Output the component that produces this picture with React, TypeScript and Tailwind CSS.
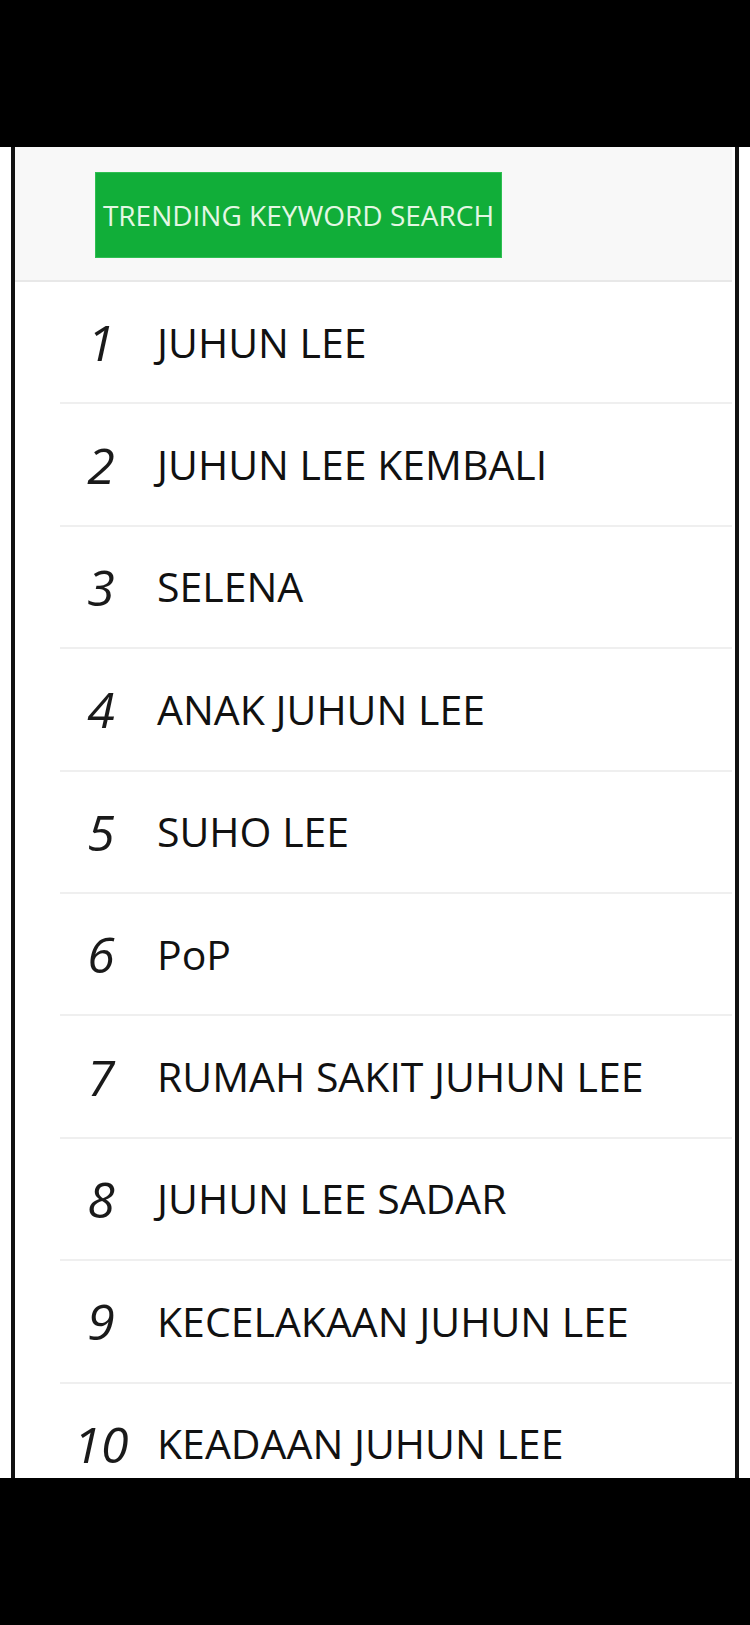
import React from "react";

const items = [
  "JUHUN LEE",
  "JUHUN LEE KEMBALI",
  "SELENA",
  "ANAK JUHUN LEE",
  "SUHO LEE",
  "PoP",
  "RUMAH SAKIT JUHUN LEE",
  "JUHUN LEE SADAR",
  "KECELAKAAN JUHUN LEE",
  "KEADAAN JUHUN LEE",
];

export default function App() {
  return (
    <div
      className="w-[750px] h-[1625px] bg-white flex flex-col"
      style={{ fontFamily: '"Open Sans", "Noto Sans", sans-serif' }}
    >
      <div className="h-[147px] bg-black shrink-0" />
      <div className="h-[1331px] flex shrink-0 overflow-hidden">
        <div className="w-[11px] bg-white shrink-0" />
        <div className="w-[4px] bg-[#111] shrink-0" />
        <div className="flex-1 flex flex-col pr-[3px] overflow-hidden">
          <div className="h-[135px] shrink-0 bg-[#f8f8f8] border-b-2 border-[#e8e8e8] pl-[80px] pt-[25px]">
            <div className="w-[407px] h-[86px] bg-[#11ae39] border border-[#2fbf52] flex items-center justify-center">
              <span className="text-[28px] leading-none text-[#e4f7e4]">
                TRENDING KEYWORD SEARCH
              </span>
            </div>
          </div>
          <div className="flex flex-col">
            {items.map((t, i) => (
              <div
                key={i}
                className="ml-[45px] h-[122.4px] shrink-0 border-b-2 border-[#efefef] flex items-center"
              >
                <div className="w-[82px] shrink-0 text-center italic font-normal text-[50px] leading-none text-[#1a1a1a]">
                  {i + 1}
                </div>
                <div className="ml-[15px] text-[41px] leading-none text-[#111] whitespace-nowrap">
                  {t}
                </div>
              </div>
            ))}
          </div>
        </div>
        <div className="w-[4px] bg-[#111] shrink-0" />
        <div className="w-[11px] bg-white shrink-0" />
      </div>
      <div className="flex-1 bg-black" />
    </div>
  );
}
